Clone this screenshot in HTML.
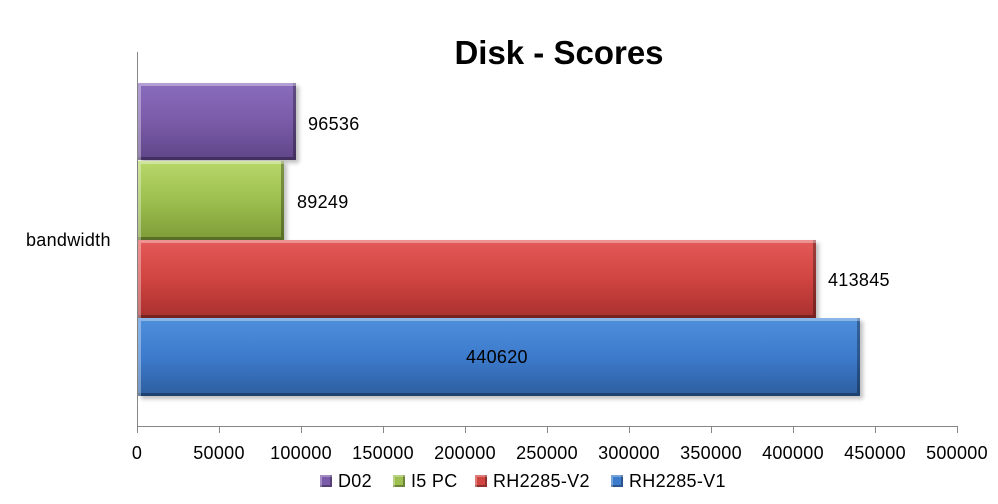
<!DOCTYPE html>
<html><head><meta charset="utf-8"><style>
body{margin:0;width:998px;height:504px;background:#fff;position:relative;overflow:hidden;font-family:"Liberation Sans",sans-serif;color:#000}
.a{position:absolute}
.bar{position:absolute;left:138px;box-shadow:inset 3px 3px 0 rgba(255,255,255,.35),inset -3px -3px 0 rgba(0,0,0,.3),3px 3px 4px rgba(0,0,0,.25)}
.lbl{position:absolute;font-size:18px;letter-spacing:0.3px}
.tk{position:absolute;top:426px;width:1px;height:7px;background:#868686}
.tl{position:absolute;top:443px;font-size:18px;width:100px;text-align:center;letter-spacing:0.3px}
.lg{position:absolute;top:471px;font-size:18px;letter-spacing:0.3px}
.sw{display:inline-block;width:12px;height:12px;margin-right:6px;vertical-align:0px;box-shadow:inset 2px 2px 0 rgba(255,255,255,.3),inset -2px -2px 0 rgba(0,0,0,.3)}
</style></head><body>
<div class="a" style="left:0;width:1118px;top:34px;text-align:center;font-size:33px;font-weight:bold;letter-spacing:0px">Disk - Scores</div>
<div class="a" style="left:137px;top:52px;width:1px;height:375px;background:#868686"></div>
<div class="a" style="left:137px;top:426px;width:821px;height:1px;background:#868686"></div>
<div class="bar" style="top:83px;width:158px;height:77px;background:linear-gradient(#8a6cbd,#7a5ba8 50%,#5f4588)"></div>
<div class="bar" style="top:161px;width:146px;height:79px;background:linear-gradient(#b8d86a,#9cbf4f 50%,#7e9c38)"></div>
<div class="bar" style="top:240px;width:678px;height:78px;background:linear-gradient(#e45a58,#d04441 50%,#a8302e)"></div>
<div class="bar" style="top:318px;width:722px;height:78px;background:linear-gradient(#4e8fdc,#3d7bcc 50%,#2d5d9f)"></div>
<div class="lbl" style="left:308px;top:114px">96536</div>
<div class="lbl" style="left:297px;top:192px">89249</div>
<div class="lbl" style="left:828px;top:270px">413845</div>
<div class="lbl" style="left:466px;top:347px">440620</div>
<div class="lbl" style="left:26px;top:230px">bandwidth</div>
<div class="tk" style="left:137px"></div><div class="tk" style="left:219px"></div><div class="tk" style="left:301px"></div><div class="tk" style="left:383px"></div><div class="tk" style="left:465px"></div><div class="tk" style="left:547px"></div><div class="tk" style="left:629px"></div><div class="tk" style="left:711px"></div><div class="tk" style="left:793px"></div><div class="tk" style="left:875px"></div><div class="tk" style="left:957px"></div>
<div class="tl" style="left:87px">0</div><div class="tl" style="left:169px">50000</div><div class="tl" style="left:251px">100000</div><div class="tl" style="left:333px">150000</div><div class="tl" style="left:415px">200000</div><div class="tl" style="left:497px">250000</div><div class="tl" style="left:579px">300000</div><div class="tl" style="left:661px">350000</div><div class="tl" style="left:743px">400000</div><div class="tl" style="left:825px">450000</div><div class="tl" style="left:907px">500000</div>
<div class="lg" style="left:320px"><span class="sw" style="background:#7a5ba8"></span>D02</div>
<div class="lg" style="left:393px"><span class="sw" style="background:#9cbf4f"></span>I5 PC</div>
<div class="lg" style="left:475px"><span class="sw" style="background:#d04441"></span>RH2285-V2</div>
<div class="lg" style="left:611px"><span class="sw" style="background:#3d7bcc"></span>RH2285-V1</div>
</body></html>
